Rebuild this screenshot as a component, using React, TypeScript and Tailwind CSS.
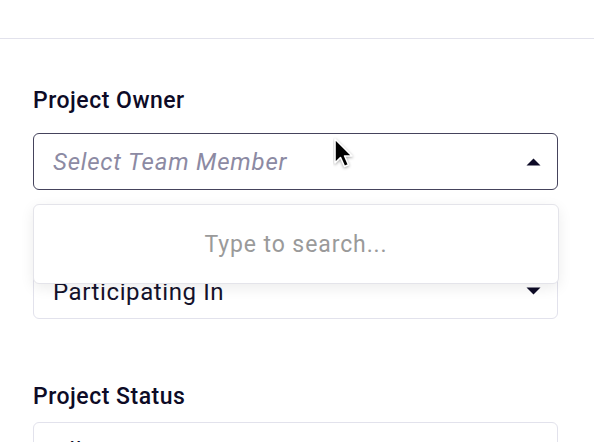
import React from "react";

const Caret = ({ up }: { up?: boolean }) => (
  <svg width="15" height="8" viewBox="0 0 15 8" className="shrink-0">
    {up ? (
      <path d="M7.5 0.5 L14.5 7.5 L0.5 7.5 Z" fill="#0d0b26" />
    ) : (
      <path d="M0.5 0.5 L14.5 0.5 L7.5 7.5 Z" fill="#0d0b26" />
    )}
  </svg>
);

const Cursor = () => (
  <svg
    width="24"
    height="34"
    viewBox="0 0 24 34"
    className="absolute left-[333px] top-[137px] pointer-events-none"
  >
    <path
      d="M2 2 L2 26 L7.5 20.5 L11.5 29.5 L15.5 27.8 L11.6 19 L19 19 Z"
      fill="#000"
      stroke="#fff"
      strokeWidth="1.6"
      strokeLinejoin="round"
      style={{ filter: "drop-shadow(0 1px 1.5px rgba(0,0,0,0.35))" }}
    />
  </svg>
);

export default function App() {
  return (
    <div
      className="relative h-[442px] w-[594px] overflow-hidden bg-white"
      style={{ fontFamily: "Roboto, 'Liberation Sans', sans-serif" }}
    >
      <div className="h-[39px] border-b-[1.5px] border-[#e2e2ec]" />

      <div className="pl-[33px] pr-[36px] pt-[49px]">
        {/* Project Owner */}
        <div className="text-[23px] font-medium leading-[26px] tracking-[0.5px] text-[#0d0b26]">
          Project Owner
        </div>
        <div className="relative mt-[19px]">
          <div className="flex h-[57px] items-center justify-between rounded-[6px] border-[1.5px] border-[#45435c] pl-[19px] pr-[16px]">
            <span className="text-[24px] italic tracking-[0.8px] text-[#8c8aa3]">
              Select Team Member
            </span>
            <Caret up />
          </div>

          {/* dropdown menu */}
          <div className="absolute left-0 right-[-1px] top-[71px] z-10 flex h-[80px] items-center justify-center rounded-[6px] border border-[#e4e4ea] bg-white shadow-[0_4px_14px_rgba(0,0,0,0.08)]">
            <span className="mt-[2px] text-[23px] tracking-[0.9px] text-[#9a9a9a]">
              Type to search...
            </span>
          </div>
        </div>

        {/* Participating filter */}
        <div className="mt-[72px] flex h-[57px] items-center justify-between rounded-[6px] border border-[#e2e2ec] pl-[19px] pr-[16px]">
          <span className="mt-[3px] text-[24px] tracking-[0.6px] text-[#14122b]">
            Participating In
          </span>
          <Caret />
        </div>

        {/* Project Status */}
        <div className="mt-[65px] text-[23px] font-medium leading-[26px] tracking-[0.5px] text-[#0d0b26]">
          Project Status
        </div>
        <div className="mt-[12px] flex h-[57px] items-center justify-between rounded-[6px] border border-[#e2e2ec] pl-[19px] pr-[16px]">
          <span className="text-[24px] tracking-[0.6px] text-[#14122b]">All</span>
          <Caret />
        </div>
      </div>

      <Cursor />
    </div>
  );
}
